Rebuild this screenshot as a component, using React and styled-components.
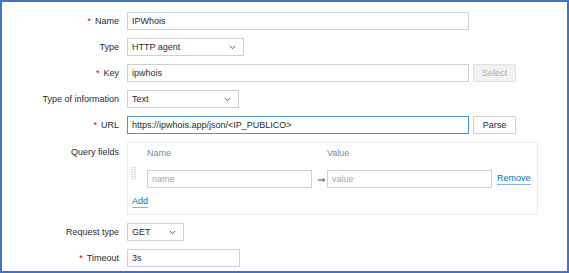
import React from "react";
import styled, { createGlobalStyle } from "styled-components";

const GlobalStyle = createGlobalStyle`
  html, body {
    margin: 0;
    padding: 0;
    background: #ffffff;
  }
  * {
    box-sizing: border-box;
  }
`;

// outer frame with the blue border of the screenshot
const Frame = styled.div`
  width: 569px;
  height: 273px;
  border: 2px solid #4472c4;
  background: #ffffff;
  padding-top: 10px;
  font-family: "Liberation Sans", Arial, sans-serif;
  font-size: 9px;
  color: #1f2c33;
  display: flex;
  flex-direction: column;
  gap: 8px;
`;

const Row = styled.div`
  display: flex;
  align-items: ${(p) => (p.$top ? "flex-start" : "center")};
  gap: 8px;
`;

const Label = styled.div`
  width: 117px;
  flex-shrink: 0;
  text-align: right;
  line-height: 18px;
  padding-top: ${(p) => (p.$top ? "1px" : "0")};
`;

const Star = styled.span`
  color: #d40000;
  margin-right: 4px;
`;

const Field = styled.div`
  display: flex;
  align-items: center;
  gap: 4px;
`;

const Input = styled.div`
  width: ${(p) => p.$w}px;
  height: 18px;
  border: 1px solid ${(p) => (p.$focus ? "#4f94cd" : "#cfcfcf")};
  background: #ffffff;
  padding: 0 4px;
  line-height: 16px;
  color: ${(p) => (p.$ph ? "#a6a6a6" : "#1f2c33")};
  white-space: nowrap;
  overflow: hidden;
`;

const Select = styled(Input)`
  display: flex;
  align-items: center;
  justify-content: space-between;
  padding-right: 7px;
`;

const Chevron = () => (
  <svg width="7" height="5" viewBox="0 0 7 5">
    <path d="M0.8 1 L3.5 3.7 L6.2 1" fill="none" stroke="#4a5a63" strokeWidth="1" />
  </svg>
);

const Button = styled.div`
  width: 43px;
  height: 18px;
  border: 1px solid ${(p) => (p.$disabled ? "#e2e2e2" : "#cfcfcf")};
  background: ${(p) => (p.$disabled ? "#f2f2f2" : "#ffffff")};
  color: ${(p) => (p.$disabled ? "#acacac" : "#1f2c33")};
  text-align: center;
  line-height: 16px;
  border-radius: 1px;
`;

// query fields table
const QueryBox = styled.div`
  width: 411px;
  height: 73px;
  border: 1px solid #ebeef0;
  padding: 2px 0 0 3px;
  display: grid;
  grid-template-columns: 11px 165px 5px 165px auto;
  column-gap: 5px;
  grid-auto-rows: min-content;
  align-items: center;
`;

const Head = styled.div`
  color: #768d99;
  line-height: 12px;
  height: 16px;
  padding-top: 2px;
`;

const Handle = styled.div`
  align-self: start;
  margin-top: 6px;
  height: 13px;
`;

const Arrow = styled.div`
  font-family: "DejaVu Sans", sans-serif;
  font-size: 10px;
  color: #4a5a63;
  text-align: center;
  margin-top: 9px;
`;

const Cell = styled.div`
  margin-top: 9px;
`;

const Link = styled.span`
  color: #0275b8;
  border-bottom: 1px solid #7fb6dc;
  line-height: 11px;
  display: inline-block;
`;

const AddCell = styled.div`
  grid-column: 1 / span 3;
  margin-top: 8px;
  padding-left: 1px;
`;

const DragDots = () => (
  <svg width="6" height="13" viewBox="0 0 6 13">
    {[0, 1, 2, 3, 4, 5].map((r) =>
      [0, 1].map((c) => (
        <rect key={`${r}-${c}`} x={c * 3 + 0.5} y={r * 2.2 + 0.3} width="1" height="1" fill="#9aa5ab" />
      ))
    )}
  </svg>
);

export default function App() {
  return (
    <>
      <GlobalStyle />
      <Frame>
        <Row>
          <Label><Star>*</Star>Name</Label>
          <Input $w={342}>IPWhois</Input>
        </Row>
        <Row>
          <Label>Type</Label>
          <Select $w={117}>HTTP agent<Chevron /></Select>
        </Row>
        <Row>
          <Label><Star>*</Star>Key</Label>
          <Field>
            <Input $w={342}>ipwhois</Input>
            <Button $disabled>Select</Button>
          </Field>
        </Row>
        <Row>
          <Label>Type of information</Label>
          <Select $w={112}>Text<Chevron /></Select>
        </Row>
        <Row>
          <Label><Star>*</Star>URL</Label>
          <Field>
            <Input $w={342} $focus>https://ipwhois.app/json/&lt;IP_PUBLICO&gt;</Input>
            <Button>Parse</Button>
          </Field>
        </Row>
        <Row $top>
          <Label $top>Query fields</Label>
          <QueryBox>
            <div />
            <Head>Name</Head>
            <div />
            <Head>Value</Head>
            <div />
            <Handle><DragDots /></Handle>
            <Cell><Input $w={165} $ph>name</Input></Cell>
            <Arrow>⇒</Arrow>
            <Cell><Input $w={165} $ph>value</Input></Cell>
            <Cell><Link>Remove</Link></Cell>
            <AddCell><Link>Add</Link></AddCell>
          </QueryBox>
        </Row>
        <Row>
          <Label>Request type</Label>
          <Select $w={57}>GET<Chevron /></Select>
        </Row>
        <Row>
          <Label><Star>*</Star>Timeout</Label>
          <Input $w={113}>3s</Input>
        </Row>
      </Frame>
    </>
  );
}
